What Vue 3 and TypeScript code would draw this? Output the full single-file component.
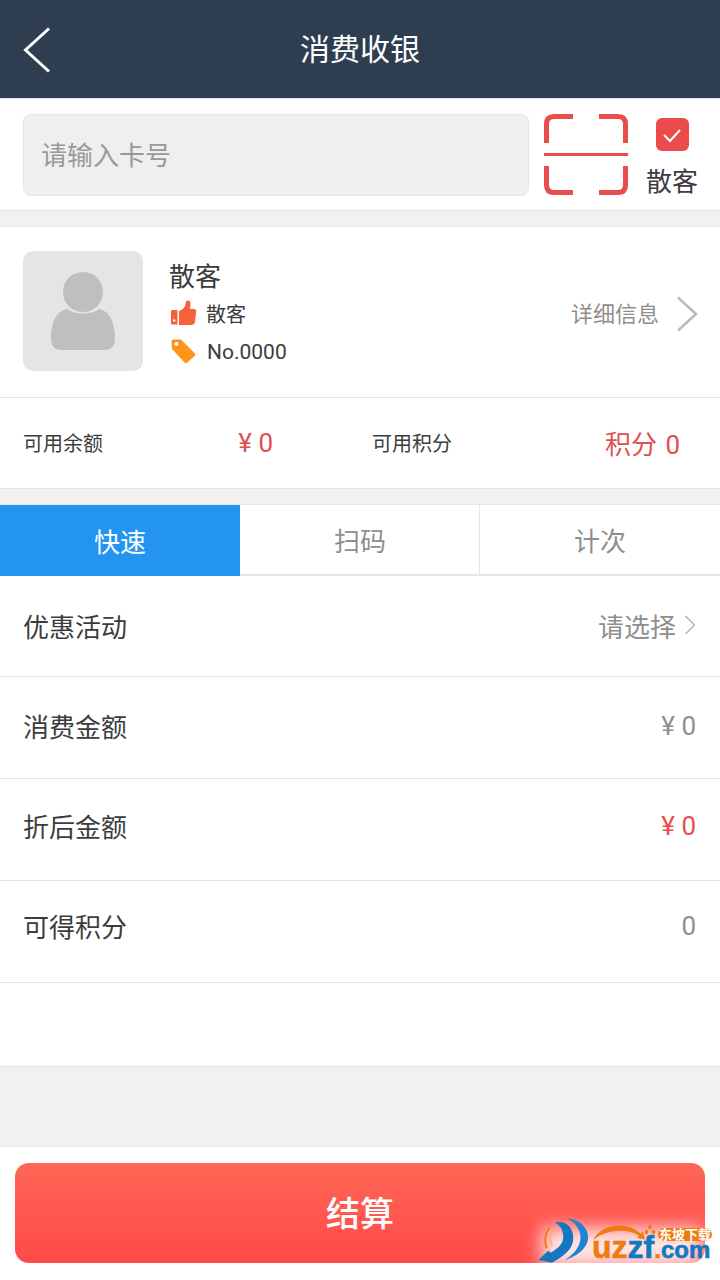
<template>
  <div class="page">
    <header class="nav">
      <svg class="back" width="28" height="46" viewBox="0 0 28 46">
        <path d="M26 1.500 L2.500 23 L26 44.500" fill="none" stroke="#fff" stroke-width="3" />
      </svg>
      <h1>消费收银</h1>
    </header>

    <section class="search">
      <div class="card-input">请输入卡号</div>
      <svg class="scan" width="84" height="82" viewBox="0 0 84 82">
        <g fill="none" stroke="#ea4c4c" stroke-width="5">
          <path d="M29 2.500 H10 Q2.500 2.500 2.500 10 V29" />
          <path d="M55 2.500 H74 Q81.500 2.500 81.500 10 V29" />
          <path d="M29 78.500 H10 Q2.500 78.500 2.500 71 V52" />
          <path d="M55 78.500 H74 Q81.500 78.500 81.500 71 V52" />
        </g>
        <rect x="0" y="39" width="84" height="3" fill="#ea4c4c" />
      </svg>
      <div class="guest">
        <span class="check">
          <svg width="20" height="16" viewBox="0 0 20 16">
            <path d="M2 8 L8 14 L18 3" fill="none" stroke="#fff" stroke-width="2" />
          </svg>
        </span>
        <span>散客</span>
      </div>
    </section>

    <section class="member">
      <div class="avatar">
        <svg width="66" height="80" viewBox="0 0 66 80">
          <circle cx="33" cy="21" r="20" fill="#bfbfbf" />
          <path d="M17 38 C24 44 42 44 49 38 C60 40 65 52 65 68 C65 75 61 79 55 79 H11 C5 79 1 75 1 68 C1 52 6 40 17 38 Z" fill="#bfbfbf" />
        </svg>
      </div>
      <div class="info">
        <div class="name">散客</div>
        <div class="line">
          <svg width="26" height="26" viewBox="0 0 26 26">
            <path d="M1.500 10 H6.500 V24.500 H1.500 C0.500 24.500 0 24 0 23 V11.500 C0 10.500 0.500 10 1.500 10 Z" fill="#f4623a" />
            <circle cx="3.200" cy="20.500" r="1.200" fill="#fff" />
            <path d="M8 11 C11 10 13 8 14 6 L15 1.500 C15.500 0 19 0 19.500 3 L19 9 H23 C25 9 25.500 11 25 13 L24 22 C23.500 24 22 25 20 25 H8 Z" fill="#f4623a" />
          </svg>
          <span>散客</span>
        </div>
        <div class="line no">
          <svg width="26" height="26" viewBox="0 0 26 26">
            <path d="M0.500 2.500 C0.500 1 1.500 0.500 2.500 0.500 H10 L23.500 14 C24.500 15 24.500 16 23.500 17 L16.500 23.500 C15.500 24.500 14.500 24.500 13.500 23.500 L1 10 Z" fill="#ff9518" />
            <circle cx="5.500" cy="5" r="2" fill="#fff" />
          </svg>
          <span>No.0000</span>
        </div>
      </div>
      <div class="detail">
        <span>详细信息</span>
        <svg width="22" height="36" viewBox="0 0 22 36">
          <path d="M2 1.500 L20 18 L2 34.500" fill="none" stroke="#bbb" stroke-width="2.500" />
        </svg>
      </div>
    </section>

    <section class="balance">
      <div class="cell">
        <span class="cell-label">可用余额</span>
        <span class="cell-value">¥ 0</span>
      </div>
      <div class="cell">
        <span class="cell-label">可用积分</span>
        <span class="cell-value">积分 0</span>
      </div>
    </section>

    <nav class="tabs">
      <div
        v-for="(tab, i) in tabs"
        :key="tab"
        class="tab"
        :class="{ active: i === 0 }"
      >
        {{ tab }}
      </div>
    </nav>

    <section class="rows">
      <div v-for="row in rows" :key="row.label" class="row">
        <span>{{ row.label }}</span>
        <span class="row-value" :class="{ red: row.red }">
          {{ row.value }}
          <svg v-if="row.arrow" width="12" height="20" viewBox="0 0 12 20">
            <path d="M1.500 1 L10.500 10 L1.500 19" fill="none" stroke="#aaa" stroke-width="1.200" />
          </svg>
        </span>
      </div>
      <div class="row-blank"></div>
    </section>

    <div class="spacer"></div>

    <footer class="foot">
      <button class="pay">结算</button>
    </footer>

    <div class="watermark">
      <div class="wm-haze"></div>
      <svg class="wm-art" width="186" height="62" viewBox="0 0 186 62">
        <path d="M32.700 4.300 C44 5 53 12 54 22 C55 33 44 42 31 46 C40 40 46 33 46.500 24 C47 16 41 8 32.700 4.300 Z" fill="#1e86d0" />
        <path d="M21 8.700 C31 6 39.300 12.700 39.300 24.300 C39.300 34.300 31 41 22.700 46 L17.700 48.700 L4.300 46 L14.300 36.700 L16.700 38.700 C24.300 34.300 29.300 29.300 29.300 22.700 C29.300 16 26 11 21 8.700 Z" fill="#1478c0" />
        <path d="M15.300 14.300 C11 19.300 10 27.700 12.700 34.300" fill="none" stroke="#ee7d11" stroke-width="2" />
        <path d="M19 15 C16 20 16 27 18 32" fill="none" stroke="#f6b26b" stroke-width="1.500" />
        <path d="M59 26 C66 13 82 9 95 13 C100 14.500 104 17 106.500 19.500 L109 17.500 L111 25.500 L103 24 L105 21.500 C94 15 74 14 59 26 Z" fill="#ee7d11" />
        <path d="M116 10 L118 13 L116 16 L114 13 Z M112.500 15 L114.500 18 L112.500 21 L110.500 18 Z M119.500 15 L121.500 18 L119.500 21 L117.500 18 Z" fill="#ee7d11" />
      </svg>
      <span class="wm-cn">东坡下载</span>
      <span class="wm-url"><i>uz</i><b>zf</b><i class="wm-small">.</i><b class="wm-small">com</b></span>
    </div>
  </div>
</template>

<script setup lang="ts">
const tabs = ['快速', '扫码', '计次']

const rows = [
  { label: '优惠活动', value: '请选择', arrow: true, red: false },
  { label: '消费金额', value: '¥ 0', arrow: false, red: false },
  { label: '折后金额', value: '¥ 0', arrow: false, red: true },
  { label: '可得积分', value: '0', arrow: false, red: false },
]
</script>

<style>
html,
body {
  margin: 0;
  background: #fff;
}
</style>

<style scoped>
.page {
  position: relative;
  display: flex;
  flex-direction: column;
  width: 720px;
  height: 1280px;
  overflow: hidden;
  background: #f1f1f1;
  color: #3c3c3c;
  font-family: Roboto, "Noto Sans CJK SC", sans-serif;
}

.nav {
  position: relative;
  display: flex;
  align-items: center;
  justify-content: center;
  height: 98px;
  background: #2e3e50;
  border-bottom: 1px solid #e4e4e4;
}

.nav h1 {
  margin: 0;
  padding-bottom: 4px;
  color: #fff;
  font-size: 30px;
  font-weight: 400;
}

.back {
  position: absolute;
  left: 23px;
  top: 27px;
}

.search {
  display: flex;
  align-items: center;
  height: 111px;
  padding: 0 22px 0 23px;
  background: #fff;
  border-bottom: 1px solid #e4e4e4;
}

.card-input {
  box-sizing: border-box;
  display: flex;
  align-items: center;
  width: 506px;
  height: 82px;
  padding: 0 0 2px 17px;
  background: #efefef;
  border: 1px solid #e6e6e6;
  border-radius: 8px;
  color: #999;
  font-size: 26px;
}

.scan {
  margin-left: 15px;
}

.guest {
  display: flex;
  flex-direction: column;
  align-items: center;
  gap: 14px;
  margin-left: 18px;
  padding-top: 8px;
  font-size: 26px;
  line-height: 34px;
}

.check {
  display: flex;
  align-items: center;
  justify-content: center;
  width: 33px;
  height: 33px;
  margin-left: 1px;
  background: #ea4c4c;
  border-radius: 6px;
}

.member {
  display: flex;
  align-items: center;
  box-sizing: content-box;
  height: 168px;
  margin-top: 15px;
  padding: 0 22px 2px 23px;
  background: #fff;
  border-top: 1px solid #e4e4e4;
  border-bottom: 1px solid #e4e4e4;
}

.avatar {
  display: flex;
  align-items: flex-end;
  justify-content: center;
  box-sizing: border-box;
  width: 120px;
  height: 120px;
  padding-bottom: 20px;
  background: #e6e4e5;
  border-radius: 10px;
}

.info {
  flex: 1;
  margin-left: 26px;
  padding-top: 9px;
}

.name {
  font-size: 26px;
  line-height: 34px;
}

.line {
  display: flex;
  align-items: center;
  gap: 9px;
  height: 38px;
  font-size: 20px;
}

.line svg {
  flex: none;
  margin-left: 2px;
}

.no {
  gap: 10px;
  margin-top: 1px;
  font-size: 21px;
}

.detail {
  display: flex;
  align-items: center;
  gap: 17px;
  padding-top: 2px;
  color: #8e8e8e;
  font-size: 22px;
}

.detail svg {
  margin-top: 4px;
}

.balance {
  display: flex;
  height: 90px;
  padding: 0 40px 0 23px;
  background: #fff;
  border-bottom: 1px solid #e4e4e4;
}

.cell {
  display: flex;
  align-items: center;
  justify-content: space-between;
  flex: 1;
}

.cell:first-child {
  flex: none;
  width: 250px;
  margin-right: 99px;
}

.cell-label {
  margin-bottom: 2px;
  font-size: 20px;
}

.cell-value {
  color: #e04f4f;
  font-size: 26px;
}

.cell:last-child .cell-value {
  margin-bottom: 2px;
  word-spacing: 2px;
}

.tabs {
  display: flex;
  box-sizing: border-box;
  height: 72px;
  margin-top: 15px;
  background: #fff;
  border-top: 1px solid #e8e8e8;
  border-bottom: 2px solid #e6e6e6;
}

.tab {
  position: relative;
  display: flex;
  align-items: center;
  justify-content: center;
  flex: 1;
  color: #8e8e8e;
  font-size: 26px;
}

.tab + .tab + .tab::before {
  content: "";
  position: absolute;
  left: -1px;
  top: 0;
  bottom: 0;
  width: 1px;
  background: #e6e6e6;
}

.tab.active {
  height: 71px;
  background: #2394f0;
  color: #fff;
}

.rows {
  background: #fff;
}

.row {
  display: flex;
  align-items: center;
  justify-content: space-between;
  box-sizing: border-box;
  height: 102px;
  padding: 0 24px 2px 23px;
  border-bottom: 1px solid #e4e4e4;
  font-size: 26px;
}

.row:nth-child(1) {
  height: 101px;
}

.row:nth-child(2) {
  padding-bottom: 4px;
}

.row:nth-child(3) {
  padding-bottom: 8px;
}

.row:nth-child(4) {
  padding-bottom: 12px;
}

.row-value {
  display: flex;
  align-items: center;
  gap: 8px;
  color: #8e8e8e;
}

.row-value.red {
  color: #ea4c4c;
}

.row-blank {
  height: 83px;
  border-bottom: 1px solid #e4e4e4;
}

.spacer {
  flex: 1;
}

.foot {
  box-sizing: border-box;
  height: 134px;
  padding: 16px 15px 0;
  background: #fff;
  border-top: 1px solid #e4e4e4;
}

.pay {
  display: block;
  width: 100%;
  height: 100px;
  padding: 0 0 4px;
  background: linear-gradient(#ff6655, #ff4a4a);
  border: 0;
  border-radius: 14px;
  color: #fff;
  font-family: inherit;
  font-size: 34px;
  font-weight: 500;
}

.watermark {
  position: absolute;
  left: 534px;
  top: 1214px;
  width: 186px;
  height: 62px;
}

.wm-haze {
  position: absolute;
  left: 8px;
  top: 14px;
  width: 160px;
  height: 40px;
  background: #fff;
  filter: blur(9px);
  opacity: 0.85;
}

.wm-art {
  position: absolute;
  left: 0;
  top: 0;
}

.wm-cn {
  position: absolute;
  left: 124px;
  top: 14px;
  width: 54px;
  background: #ee7d11;
  border-radius: 7px;
  color: #fff;
  font-size: 13px;
  font-weight: 700;
  line-height: 13px;
  text-align: center;
}

.wm-url {
  position: absolute;
  left: 58px;
  top: 28px;
  font-family: "Liberation Sans", sans-serif;
  font-size: 32px;
  font-weight: 700;
  line-height: 11px;
  white-space: nowrap;
}

.wm-url i,
.wm-url b {
  font-style: normal;
  -webkit-text-stroke: 0.6px currentColor;
}

.wm-url i {
  color: #ee7d11;
}

.wm-url b {
  color: #1478c0;
}

.wm-small {
  font-size: 24px;
}
</style>
